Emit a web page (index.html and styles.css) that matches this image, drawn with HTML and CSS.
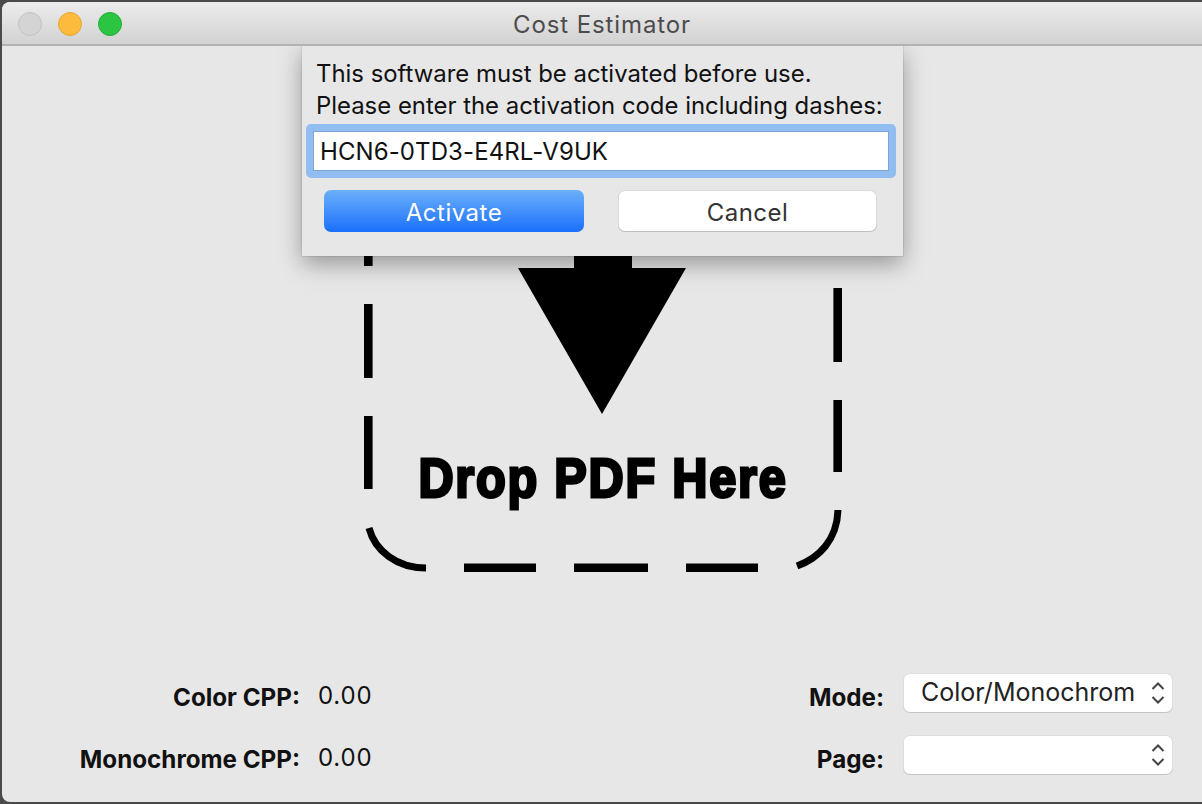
FILE: index.html
```html
<!DOCTYPE html>
<html lang="en">
<head>
<meta charset="utf-8">
<title>Cost Estimator</title>
<link rel="stylesheet" href="styles.css">
</head>
<body>
<div class="window">
  <header class="titlebar">
    <div class="lights">
      <span class="light light-off"></span>
      <span class="light light-min"></span>
      <span class="light light-max"></span>
    </div>
    <div class="title">Cost Estimator</div>
  </header>
  <main class="content">
    <section class="drop">
      <svg class="drop-art" width="480" height="528" viewBox="0 0 480 528">
        <g class="dash">
          <path d="M5.300 196V220M5.300 258V332M5.300 370V443"/>
          <path class="arc" d="M6 482C12 505 34 522 63 522"/>
          <path d="M101 521.700H173M211 521.700H285M323 521.700H395"/>
          <path class="arc" d="M434 520C456 512 474 494 475 464"/>
          <path d="M474.700 242V316M474.700 354V426"/>
        </g>
        <path class="arrow" d="M211 160H269V222H323L239 368L155 222H211Z"/>
      </svg>
      <div class="drop-text">Drop PDF Here</div>
    </section>
    <section class="stats">
      <div class="label">Color CPP:</div>
      <div class="value">0.00</div>
      <div class="label label-right">Mode:</div>
      <div class="select">
        <span class="select-text">Color/Monochrom</span>
        <svg class="chev" width="16" height="26" viewBox="0 0 16 26"><path d="M2.500 9L8 3.500L13.500 9M2.500 17L8 22.500L13.500 17"/></svg>
      </div>
      <div class="label">Monochrome CPP:</div>
      <div class="value">0.00</div>
      <div class="label label-right">Page:</div>
      <div class="select">
        <span class="select-text"></span>
        <svg class="chev" width="16" height="26" viewBox="0 0 16 26"><path d="M2.500 9L8 3.500L13.500 9M2.500 17L8 22.500L13.500 17"/></svg>
      </div>
    </section>
    <div class="sheet">
      <p class="sheet-text">This software must be activated before use.<br>Please enter the activation code including dashes:</p>
      <div class="field">HCN6-0TD3-E4RL-V9UK</div>
      <div class="buttons">
        <button class="btn btn-primary">Activate</button>
        <button class="btn btn-cancel">Cancel</button>
      </div>
    </div>
  </main>
</div>
</body>
</html>
```
FILE: styles.css
```css
* { box-sizing: border-box; }
html, body { margin: 0; height: 100%; background: #4a4a4a; overflow: hidden; }
body { padding: 2px 0 2px 2px; font-family: "Inter", "Liberation Sans", sans-serif; color: #111; }
.window { height: 800px; background: #e7e7e7; border-radius: 8px 0 0 8px; display: flex; flex-direction: column; overflow: hidden; }
.titlebar { position: relative; z-index: 2; height: 44px; flex: none; display: flex; align-items: center; justify-content: center; padding-top: 3px; background: linear-gradient(#ececec, #d2d2d2); border-bottom: 2px solid #b2b2b2; }
.lights { position: absolute; left: 16px; top: 10px; display: flex; gap: 16px; }
.light { width: 24px; height: 24px; border-radius: 50%; border: 1px solid; }
.light-off { background: #d4d4d4; border-color: #c2c2c2; }
.light-min { background: #fdbb3d; border-color: #e5a637; }
.light-max { background: #2cc542; border-color: #26aa3a; }
.title { font-size: 24px; letter-spacing: 0.9px; color: #4c4c4c; }
.content { position: relative; flex: 1; display: flex; flex-direction: column; }
.drop { position: relative; align-self: flex-start; margin-left: 361px; height: 528px; width: 480px; flex: none; }
.drop-art { display: block; }
.dash { fill: none; stroke: #000; stroke-width: 8.600; }
.dash .arc { stroke-width: 7; }
.arrow { fill: #000; }
.drop-text { position: absolute; left: 0; width: 480px; top: 397px; text-align: center; font: bold 56px/70px "Liberation Sans", sans-serif; color: #000; -webkit-text-stroke: 3px #000; letter-spacing: 2px; transform: scaleX(0.87); white-space: nowrap; }
.stats { margin-top: auto; padding: 0 29px 27px 0; display: grid; grid-template-columns: 298px 1fr auto 270px; grid-template-rows: 40px 40px; row-gap: 22px; align-items: center; }
.label { font-size: 24.200px; font-weight: 700; text-align: right; color: #111; padding-top: 8px; }
.label-right { margin-right: 19px; }
.value { font-size: 24px; letter-spacing: 0.8px; padding: 4px 0 0 18px; }
.select { height: 40px; background: #fff; border-radius: 7px; box-shadow: inset 0 0 0 1px rgba(0,0,0,.13), inset 0 -1px 0 rgba(0,0,0,.12); display: flex; align-items: center; padding: 0 7px 0 18px; }
.select-text { flex: none; font-size: 25px; white-space: nowrap; padding-bottom: 2px; color: #222; }
.chev { flex: none; margin-left: auto; fill: none; stroke: #444; stroke-width: 2; }
.sheet { position: absolute; z-index: 1; left: 300px; top: 0; width: 601px; height: 210px; background: #e7e7e7; box-shadow: 0 8px 22px rgba(0,0,0,.35), 0 0 1px rgba(0,0,0,.4); padding: 12px 5px 0 5px; }
.sheet-text { margin: 0 0 0 9px; font-size: 23.900px; line-height: 32px; white-space: nowrap; }
.field { margin: 2px 0 0 -1px; height: 54px; width: 590px; border: 7px solid #92bdf0; border-radius: 5px; background: #fff; font-size: 24px; letter-spacing: 0.1px; line-height: 41px; padding-left: 7px; box-shadow: inset 0 0 0 1px #7da6d8; color: #111; }
.buttons { display: flex; margin-top: 12px; padding-left: 17px; gap: 34px; }
.btn { height: 42px; width: 260px; border: 0; border-radius: 7px; font: 24px "Inter", "Liberation Sans", sans-serif; letter-spacing: 0.5px; padding: 2px 0 0; }
.btn-primary { background: linear-gradient(#6cb0fb, #1a70fb); color: #fff; }
.btn-cancel { width: 259px; background: #fff; color: #333; box-shadow: inset 0 0 0 1px rgba(0,0,0,.15), inset 0 -1px 0 rgba(0,0,0,.12); }
```
